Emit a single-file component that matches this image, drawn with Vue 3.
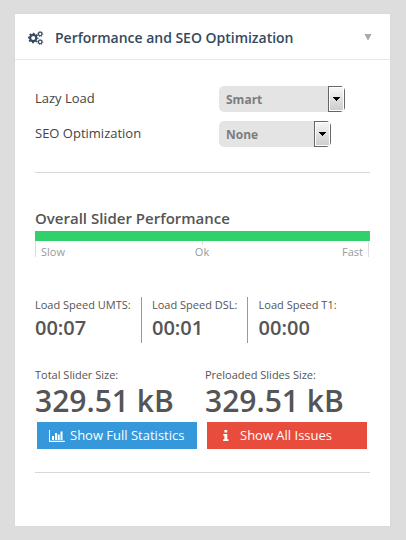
<script setup>
const options = [
  { label: 'Lazy Load', value: 'Smart', size: 'wide' },
  { label: 'SEO Optimization', value: 'None', size: 'narrow' },
]
const speeds = [
  { label: 'Load Speed UMTS:', value: '00:07' },
  { label: 'Load Speed DSL:', value: '00:01' },
  { label: 'Load Speed T1:', value: '00:00' },
]
const sizes = [
  { label: 'Total Slider Size:', value: '329.51 kB' },
  { label: 'Preloaded Slides Size:', value: '329.51 kB' },
]
</script>

<template>
  <div class="page">
    <section class="panel">
      <header class="head">
        <svg class="cogs" width="16" height="14" viewBox="0 0 16 14">
          <circle cx="5.2" cy="7" r="3.1" fill="none" stroke="#34495e" stroke-width="2.2" />
          <circle cx="5.2" cy="7" r="4.6" fill="none" stroke="#34495e" stroke-width="1.4" stroke-dasharray="1.9 1.713" stroke-dashoffset="0.95" />
          <g fill="none" stroke="#34495e">
            <circle cx="12.2" cy="3" r="1.75" stroke-width="1.2" />
            <circle cx="12.2" cy="3" r="2.55" stroke-width=".8" stroke-dasharray="1.1 .903" />
            <circle cx="12.2" cy="11" r="1.75" stroke-width="1.2" />
            <circle cx="12.2" cy="11" r="2.55" stroke-width=".8" stroke-dasharray="1.1 .903" />
          </g>
        </svg>
        <h2>Performance and SEO Optimization</h2>
        <svg class="caret" width="8" height="7" viewBox="0 0 8 7"><path d="M.5 0h7L4 6.8z" fill="#aaa" /></svg>
      </header>

      <div class="body">
        <div v-for="o in options" :key="o.label" class="option">
          <span class="option-label">{{ o.label }}</span>
          <div class="select" :class="o.size">
            <span class="select-value">{{ o.value }}</span>
            <span class="select-button">
              <svg width="7" height="4" viewBox="0 0 7 4" shape-rendering="crispEdges"><path d="M0 0h7v1H6v1H5v1H4v1H3V3H2V2H1V1H0z" fill="#000" /></svg>
            </span>
          </div>
        </div>

        <div class="rule first"></div>

        <h3>Overall Slider Performance</h3>
        <div class="bar"></div>
        <div class="scale">
          <span class="slow">Slow</span>
          <span class="ok">Ok</span>
          <span class="fast">Fast</span>
        </div>

        <div class="speeds">
          <div v-for="s in speeds" :key="s.label" class="speed">
            <div class="small">{{ s.label }}</div>
            <div class="time">{{ s.value }}</div>
          </div>
        </div>

        <div class="sizes">
          <div v-for="s in sizes" :key="s.label" class="size">
            <div class="small">{{ s.label }}</div>
            <div class="total">{{ s.value }}</div>
          </div>
        </div>

        <div class="actions">
          <button class="btn blue">
            <svg width="16" height="12" viewBox="0 0 16 12" fill="#fff">
              <path d="M0 0h1v10.7h14.8V12H0zM3 6h2v4H3zM6 3h2v7H6zM8.7 4.5h2V10h-2zM11.5 1.5h2V10h-2z" />
            </svg>
            <span>Show Full Statistics</span>
          </button>
          <button class="btn red">
            <svg width="6" height="11" viewBox="0 0 6 11" fill="#fff">
              <path d="M1.4 0h2.8v2.4H1.4zM.3 4h4v5.2h1.2V11H.2V9.2h1.2V5.7H.3z" />
            </svg>
            <span>Show All Issues</span>
          </button>
        </div>

        <div class="rule"></div>
      </div>
    </section>
  </div>
</template>

<style>
body {
  background: #ddd;
}
</style>

<style scoped>
.page {
  box-sizing: border-box;
  height: 540px;
  padding: 14px 16px 14px 15px;
  background: #ddd;
  font-family: "Open Sans", sans-serif;
  color: #555;
}
.panel {
  height: 512px;
  background: #fff;
  box-shadow: 0 0 1px #c8c8c8;
}
.head {
  box-sizing: border-box;
  display: flex;
  align-items: center;
  height: 46px;
  padding: 2px 18px 0 13px;
  border-bottom: 1px solid #e8e8e8;
}
h2 {
  flex: 1;
  margin: 0 0 0 11px;
  font-size: 14px;
  line-height: 20px;
  font-weight: 600;
  letter-spacing: -0.02px;
  color: #34495e;
  white-space: nowrap;
}
.body {
  padding: 26px 20px 0;
}
.option {
  display: flex;
  height: 26px;
  margin-bottom: 9px;
}
.option-label {
  width: 184px;
  font-size: 13px;
  line-height: 24px;
  color: #444;
}
.select {
  display: flex;
  height: 26px;
  border-radius: 5px;
  background: #e4e4e4;
  overflow: hidden;
}
.wide { width: 126px; }
.narrow { width: 112px; }
.select-value {
  flex: 1;
  padding-left: 7px;
  font-size: 12px;
  line-height: 27px;
  font-weight: 700;
  color: #7d7d7d;
}
.select-button {
  box-sizing: border-box;
  display: flex;
  align-items: center;
  justify-content: center;
  width: 17px;
  border: 1px solid #666;
  background: linear-gradient(#f7f7f7, #ccc);
  box-shadow: inset 0 0 0 1px #fff;
}
.rule {
  height: 1px;
  background: #d8d8d8;
}
.first {
  margin-top: 25px;
}
h3 {
  margin: 34px 0 0;
  padding-bottom: 1px;
  font-size: 15px;
  line-height: 23px;
  font-weight: 600;
}
.bar {
  height: 10px;
  background: #31d06a;
}
.scale {
  display: flex;
  justify-content: space-between;
  height: 16px;
  font-size: 11px;
  line-height: 22px;
  color: #999;
}
.slow {
  width: 60px;
  padding-left: 5px;
  border-left: 1px solid #ddd;
}
.fast {
  width: 60px;
  padding-right: 5px;
  margin-right: 1px;
  border-right: 1px solid #ddd;
  text-align: right;
}
.ok {
  background: linear-gradient(#ddd, #ddd) center top / 1px 4px no-repeat;
}
.speeds {
  display: grid;
  grid-template-columns: 106px 106px 1fr;
  height: 46px;
  margin-top: 40px;
}
.speed {
  padding-left: 10px;
  border-left: 1px solid #999;
  white-space: nowrap;
}
.speed:first-child {
  padding-left: 0;
  border-left: 0;
}
.speed:last-child {
  padding-left: 10.6px;
}
.small {
  font-size: 11px;
  line-height: 16px;
}
.time {
  font-size: 20px;
  line-height: 30px;
  font-weight: 600;
}
.sizes {
  display: grid;
  grid-template-columns: 170px 165px;
  margin-top: 24px;
}
.total {
  height: 39px;
  font-size: 30px;
  line-height: 36px;
  font-weight: 600;
  white-space: nowrap;
}
.actions {
  display: flex;
  gap: 10px;
  padding-left: 2px;
  margin-bottom: 23px;
}
.btn {
  display: flex;
  align-items: center;
  width: 160px;
  height: 27px;
  padding: 0;
  border: 0;
  font-family: inherit;
  font-size: 13px;
  line-height: 27px;
  color: #fff;
  white-space: nowrap;
}
.blue {
  padding-left: 12px;
  gap: 5px;
  background: #3498db;
}
.red {
  padding-left: 16px;
  gap: 11px;
  background: #e74c3c;
}
</style>
